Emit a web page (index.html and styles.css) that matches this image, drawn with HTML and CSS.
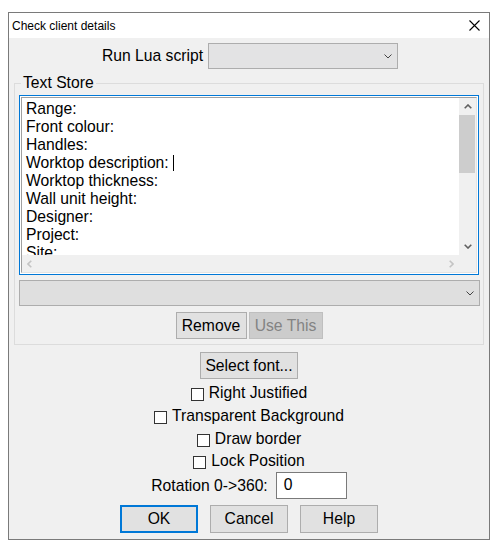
FILE: index.html
```html
<!DOCTYPE html>
<html>
<head>
<meta charset="utf-8">
<link rel="stylesheet" href="styles.css">
</head>
<body>
<div class="dialog">
  <div class="titlebar">
    <span class="title">Check client details</span>
    <svg class="close" width="11" height="11" viewBox="0 0 11 11"><path d="M0.5 0.5L10.5 10.5M10.5 0.5L0.5 10.5" stroke="#000" stroke-width="1.1" fill="none"/></svg>
  </div>
  <div class="content">
    <div class="lua-row">
      <span class="label">Run Lua script</span>
      <div class="combo combo-lua">
        <svg class="chev" width="8" height="5" viewBox="0 0 8 5"><path d="M0.5 0.5L4 4L7.5 0.5" stroke="#444" stroke-width="1" fill="none"/></svg>
      </div>
    </div>
    <fieldset class="group">
      <legend>Text Store</legend>
      <div class="edit">
        <div class="edit-inner">
          <div class="edit-text">
            <div>Range:</div>
            <div>Front colour:</div>
            <div>Handles:</div>
            <div>Worktop description: <span class="caret"></span></div>
            <div>Worktop thickness:</div>
            <div>Wall unit height:</div>
            <div>Designer:</div>
            <div>Project:</div>
            <div>Site:</div>
          </div>
          <div class="vscroll">
            <div class="arrow"><svg width="8" height="5" viewBox="0 0 8 5"><path d="M0.7 4.3L4 1L7.3 4.3" stroke="#606060" stroke-width="1.6" fill="none"/></svg></div>
            <div class="track"><div class="thumb"></div></div>
            <div class="arrow"><svg width="8" height="5" viewBox="0 0 8 5"><path d="M0.7 0.7L4 4L7.3 0.7" stroke="#606060" stroke-width="1.6" fill="none"/></svg></div>
          </div>
          <div class="hscroll">
            <div class="harrow"><svg width="5" height="8" viewBox="0 0 5 8"><path d="M4.3 0.7L1 4L4.3 7.3" stroke="#c4c4c4" stroke-width="1.6" fill="none"/></svg></div>
            <div class="harrow"><svg width="5" height="8" viewBox="0 0 5 8"><path d="M0.7 0.7L4 4L0.7 7.3" stroke="#c4c4c4" stroke-width="1.6" fill="none"/></svg></div>
          </div>
          <div class="corner"></div>
        </div>
      </div>
      <div class="combo combo-wide">
        <svg class="chev" width="8" height="5" viewBox="0 0 8 5"><path d="M0.5 0.5L4 4L7.5 0.5" stroke="#444" stroke-width="1" fill="none"/></svg>
      </div>
      <div class="btn-row">
        <button class="btn btn-remove">Remove</button>
        <button class="btn btn-use" disabled>Use This</button>
      </div>
    </fieldset>
    <button class="btn btn-font">Select font...</button>
    <label class="check check-1"><span class="box"></span>Right Justified</label>
    <label class="check"><span class="box"></span>Transparent Background</label>
    <label class="check"><span class="box"></span>Draw border</label>
    <label class="check check-4"><span class="box"></span>Lock Position</label>
    <div class="rotation">
      <span class="label">Rotation 0-&gt;360:</span>
      <div class="input">0</div>
    </div>
    <div class="actions">
      <button class="btn btn-action btn-ok">OK</button>
      <button class="btn btn-action">Cancel</button>
      <button class="btn btn-action">Help</button>
    </div>
  </div>
</div>
</body>
</html>
```
FILE: styles.css
```css
html, body {
  margin: 0;
  padding: 0;
  background: #ffffff;
}
body {
  font-family: "Liberation Sans", Arial, sans-serif;
  font-size: 15.7px;
  color: #000;
}
.dialog {
  box-sizing: border-box;
  margin: 12px 0 0 8px;
  width: 482px;
  height: 528px;
  border: 1px solid #7a7a7a;
  background: #f0f0f0;
  display: flex;
  flex-direction: column;
}
.titlebar {
  height: 25px;
  background: #ffffff;
  display: flex;
  align-items: center;
  justify-content: space-between;
  padding: 0 9px 0 3px;
}
.title {
  font-size: 12px;
  line-height: 14px;
}
.close {
  display: block;
}
.content {
  flex: 1;
  display: flex;
  flex-direction: column;
  align-items: center;
}
.label {
  line-height: 18px;
  white-space: nowrap;
}
.lua-row {
  margin-top: 5px;
  display: flex;
  align-items: center;
  gap: 5px;
  padding-left: 2px;
}
.combo {
  box-sizing: border-box;
  height: 26px;
  border: 1px solid #adadad;
  background: #e1e1e1;
  display: flex;
  align-items: center;
  justify-content: flex-end;
  padding-right: 5px;
}
.combo-lua {
  width: 190px;
  background: #e3e3e4;
}
.chev {
  display: block;
}
.group {
  box-sizing: border-box;
  width: 470px;
  margin: 5px 0 0 0;
  padding: 0 4px 5px 4px;
  border: 1px solid #dcdcdc;
  min-width: 0;
  display: flex;
  flex-direction: column;
}
.group legend {
  padding: 0 2px;
  margin-left: 2px;
  line-height: 18px;
}
.edit {
  box-sizing: border-box;
  margin-top: 3px;
  width: 460px;
  height: 180px;
  border: 1px solid #0078d7;
  padding: 1px;
  background: #ffffff;
}
.edit-inner {
  box-sizing: border-box;
  height: 100%;
  border-top: 1px solid #a0a0a0;
  border-left: 1px solid #a0a0a0;
  border-right: 1px solid #e3e3e3;
  border-bottom: 1px solid #e3e3e3;
  display: grid;
  grid-template-columns: 1fr 17px;
  grid-template-rows: 1fr 17px;
  overflow: hidden;
}
.edit-text {
  padding: 2px 0 0 4px;
  line-height: 18px;
  overflow: hidden;
  white-space: nowrap;
}
.caret {
  display: inline-block;
  width: 1px;
  height: 16px;
  background: #000;
  vertical-align: -3px;
}
.vscroll {
  background: #f0f0f0;
  display: flex;
  flex-direction: column;
}
.arrow {
  height: 17px;
  display: flex;
  align-items: center;
  justify-content: center;
}
.track {
  flex: 1;
}
.thumb {
  height: 58px;
  background: #cdcdcd;
  margin: 0 1px 0 0;
}
.hscroll {
  background: #f0f0f0;
  display: flex;
  justify-content: space-between;
  align-items: center;
  padding: 0 5px;
}
.harrow {
  display: flex;
  align-items: center;
}
.corner {
  background: #f0f0f0;
}
.combo-wide {
  margin-top: 5px;
  width: 461px;
  background: #dfdfdf;
}
.btn {
  box-sizing: border-box;
  font-family: "Liberation Sans", Arial, sans-serif;
  font-size: 15.7px;
  color: #000;
  background: #e1e1e1;
  border: 1px solid #adadad;
  padding: 0;
  margin: 0;
  height: 27px;
  line-height: 18px;
}
.btn-row {
  margin-top: 6px;
  display: flex;
  justify-content: center;
  gap: 2px;
}
.btn-remove {
  width: 71px;
}
.btn-use {
  width: 74px;
  background: #cccccc;
  border-color: #bfbfbf;
  color: #838383;
}
.btn-font {
  margin-top: 7px;
  width: 98px;
}
.check {
  display: flex;
  align-items: flex-start;
  line-height: 18px;
  height: 18px;
  margin-top: 5px;
  white-space: nowrap;
}
.check-4 {
  margin-top: 4px;
}
.box {
  box-sizing: border-box;
  width: 13px;
  height: 13px;
  border: 1px solid #333333;
  background: #ffffff;
  margin: 4px 5px 0 0;
}
.rotation {
  margin-top: 2px;
  display: flex;
  align-items: center;
  gap: 8px;
}
.input {
  box-sizing: border-box;
  width: 71px;
  height: 27px;
  border: 1px solid #7a7a7a;
  background: #ffffff;
  padding: 3px 0 0 7px;
  line-height: 18px;
}
.actions {
  margin-top: 6px;
  display: flex;
  gap: 12px;
}
.btn-action {
  width: 78px;
  height: 28px;
}
.btn-ok {
  border: 2px solid #0078d7;
}
```
